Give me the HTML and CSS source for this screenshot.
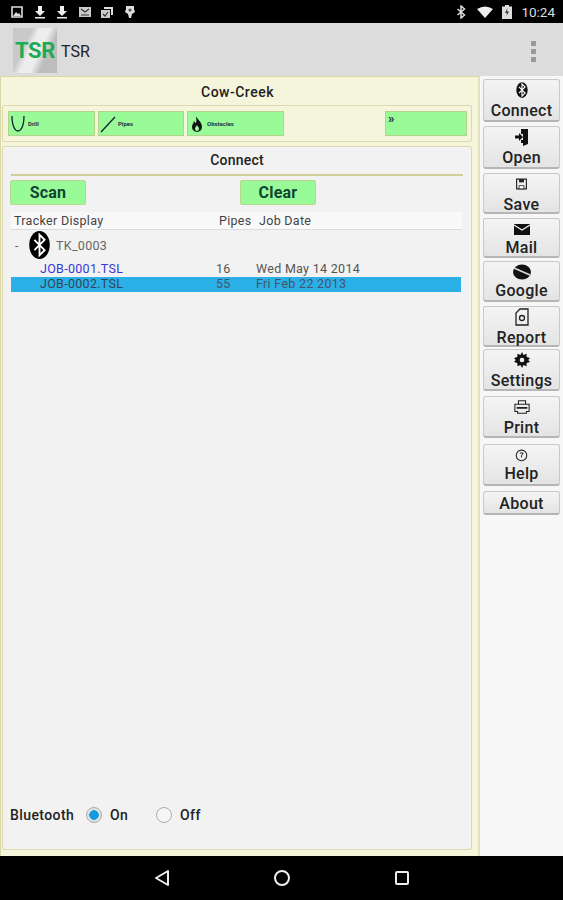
FILE: index.html
```html
<!DOCTYPE html>
<html lang="en">
<head>
<meta charset="utf-8">
<title>TSR</title>
<link rel="stylesheet" href="styles.css">
</head>
<body>
<div class="app">
  <header class="status">
    <div class="status-left">
      <svg class="si" viewBox="0 0 14 14"><path d="M2 2h10v10H2z" fill="none" stroke="#ddd" stroke-width="1.6"/><path d="M3 11l3-4 2 2 1-1 2 3z" fill="#ddd"/></svg>
      <svg class="si" viewBox="0 0 14 14"><path d="M5 1h4v5h3l-5 5-5-5h3zM2 12h10v1.6H2z" fill="#eee"/></svg>
      <svg class="si" viewBox="0 0 14 14"><path d="M5 1h4v5h3l-5 5-5-5h3zM2 12h10v1.6H2z" fill="#eee"/></svg>
      <svg class="si" viewBox="0 0 14 14"><path d="M1 2h12v10H1z" fill="#ccc"/><path d="M3 4l4 3 4-3M3 10h8" fill="none" stroke="#333" stroke-width="1.2"/></svg>
      <svg class="si" viewBox="0 0 14 14"><path d="M1 5h9v8H1z" fill="#ccc"/><path d="M4 4V2h9v8h-2V4z" fill="#ddd"/><path d="M3 9l2 2 3-4" fill="none" stroke="#333" stroke-width="1.2"/></svg>
      <svg class="si" viewBox="0 0 14 14"><path d="M3 1h8v3l1 3-3 2-1 4H6L5 9 2 7l1-3z" fill="#ddd"/><circle cx="7" cy="5" r="1.6" fill="#555"/></svg>
    </div>
    <div class="status-right">
      <svg class="si" viewBox="0 0 14 14"><path d="M3.500 4l7 6-3.500 3V1l3.500 3-7 6" fill="none" stroke="#ddd" stroke-width="1.500"/></svg>
      <svg class="wifi" viewBox="0 0 16 12"><path d="M0 3Q8-2 16 3L8 12z" fill="#eee"/></svg>
      <svg class="batt" viewBox="0 0 10 14"><path d="M3 0h4v1.500h3V14H0V1.500h3z" fill="#ddd"/><path d="M5.500 3L3 8h2l-.5 3L7 6.500H5z" fill="#333"/></svg>
      <span class="clock">10:24</span>
    </div>
  </header>

  <div class="actionbar">
    <div class="logo"><span class="logo-text">TSR</span></div>
    <span class="app-title">TSR</span>
    <div class="overflow"><i></i><i></i><i></i></div>
  </div>

  <main class="content">
    <section class="left">
      <h1 class="project">Cow-Creek</h1>
      <div class="tabs">
        <div class="tab tab-drill">
          <svg class="tab-icon" viewBox="0 0 16 18"><path d="M2 1c0 10 3 15 6 15s6-5 6-15" fill="none" stroke="#123" stroke-width="1.300"/></svg>
          <span>Drill</span>
        </div>
        <div class="tab tab-pipes">
          <svg class="tab-icon" viewBox="0 0 16 18"><path d="M1 17L15 2" fill="none" stroke="#123" stroke-width="1.300"/></svg>
          <span>Pipes</span>
        </div>
        <div class="tab tab-obst">
          <svg class="tab-icon" viewBox="0 0 16 18"><path d="M7 1c1 3 6 6 6 11a5 5 0 0 1-10 0c0-3 2-4 2-6 1 1 1 2 2 2 1-2 0-5 0-7z M8 10c-1 2-2 2-2 4a2 2 0 0 0 4 0c0-2-1-2-2-4z" fill="#111" fill-rule="evenodd"/></svg>
          <span>Obstacles</span>
        </div>
        <div class="tab tab-more">&raquo;</div>
      </div>

      <section class="panel">
        <h2 class="panel-title">Connect</h2>
        <div class="actions">
          <button class="green-btn">Scan</button>
          <button class="green-btn">Clear</button>
        </div>
        <div class="table-head">
          <span class="col-name">Tracker Display</span>
          <span class="col-pipes">Pipes</span>
          <span class="col-date">Job Date</span>
        </div>
        <div class="device">
          <span class="dash">-</span>
          <svg class="bt-badge" viewBox="0 0 22 30"><ellipse cx="11" cy="15" rx="11" ry="15" fill="#000"/><path d="M5.500 9.500l11 11-5.500 5.500V4l5.500 5.500-11 11" fill="none" stroke="#fff" stroke-width="2"/></svg>
          <span class="device-name">TK_0003</span>
        </div>
        <div class="job">
          <span class="job-name">JOB-0001.TSL</span>
          <span class="job-pipes">16</span>
          <span class="job-date">Wed May 14 2014</span>
        </div>
        <div class="job job-selected">
          <span class="job-name">JOB-0002.TSL</span>
          <span class="job-pipes">55</span>
          <span class="job-date">Fri Feb 22 2013</span>
        </div>
        <div class="bt-row">
          <span class="bt-label">Bluetooth</span>
          <span class="radio radio-on"></span>
          <span class="radio-text radio-text-on">On</span>
          <span class="radio"></span>
          <span class="radio-text">Off</span>
        </div>
      </section>
    </section>

    <aside class="side">
      <button class="sbtn h43 gap4">
        <svg class="sicon narrow" viewBox="0 0 16 18"><ellipse cx="8" cy="9" rx="6.500" ry="9" fill="#111"/><path d="M4.500 5.500l7 7L8 16V2l3.500 3.500-7 7" fill="none" stroke="#fff" stroke-width="1.300"/></svg>
        <span>Connect</span>
      </button>
      <button class="sbtn h43 gap4">
        <svg class="sicon" viewBox="0 0 16 18"><path d="M7 1h7v15l-5 2V15H7v-3h2V6H7zM1 7.500h4V5l4 4-4 4v-2.500H1z" fill="#111"/></svg>
        <span>Open</span>
      </button>
      <button class="sbtn h41 gap4">
        <svg class="sicon small" viewBox="0 0 16 18"><path d="M2 3h12v12H2z" fill="none" stroke="#222" stroke-width="1.400"/><path d="M5 3h6v4H5z" fill="#222"/><path d="M5 11h6v4H5z" fill="#fff" stroke="#222"/></svg>
        <span>Save</span>
      </button>
      <button class="sbtn h40 gap3">
        <svg class="sicon tighter" viewBox="0 0 16 14"><path d="M0 2h16v11H0z" fill="#111"/><path d="M0 3l8 5 8-5" fill="none" stroke="#eee" stroke-width="1.300"/></svg>
        <span>Mail</span>
      </button>
      <button class="sbtn h41 gap4">
        <svg class="sicon tighter wide" viewBox="0 0 18 16"><ellipse cx="9" cy="8" rx="9" ry="7.500" fill="#111"/><path d="M1 4l16 7" stroke="#ddd" stroke-width="1.500"/></svg>
        <span>Google</span>
      </button>
      <button class="sbtn h41 gap2">
        <svg class="sicon" viewBox="0 0 14 18"><path d="M5 1h8v16H1V5z" fill="none" stroke="#222" stroke-width="1.300"/><circle cx="7" cy="10" r="2.500" fill="none" stroke="#222" stroke-width="1.300"/></svg>
        <span>Report</span>
      </button>
      <button class="sbtn h42 gap5">
        <svg class="sicon" viewBox="0 0 16 16"><path d="M8 0l1.500 3 3-1.200.2 3.300 3.300 .9-1.800 2 1.800 2-3.300 .9-.2 3.300-3-1.200L8 16l-1.500-3-3 1.200-.2-3.300L0 10l1.800-2L0 6l3.300-.9.2-3.300 3 1.200z" fill="#111"/><circle cx="8" cy="8" r="2.300" fill="#eee"/></svg>
        <span>Settings</span>
      </button>
      <button class="sbtn h42 gap6">
        <svg class="sicon" viewBox="0 0 18 16"><path d="M5 5V1h8v4M1 5h16v8h-3v2H4v-2H1z" fill="none" stroke="#222" stroke-width="1.200"/><path d="M3 9h12" stroke="#222" stroke-width="2"/></svg>
        <span>Print</span>
      </button>
      <button class="sbtn h42 gap5">
        <svg class="sicon tighter small" viewBox="0 0 16 16"><circle cx="8" cy="8.500" r="6.500" fill="none" stroke="#222" stroke-width="1.300"/><path d="M6 5.500h4L8 9v2" fill="none" stroke="#222" stroke-width="1.200"/></svg>
        <span>Help</span>
      </button>
      <button class="sbtn h24"><span>About</span></button>
    </aside>
  </main>

  <nav class="navbar">
    <svg class="nav-icon" viewBox="0 0 18 18"><path d="M15 2v14L3 9z" fill="none" stroke="#eee" stroke-width="2" stroke-linejoin="round"/></svg>
    <svg class="nav-icon" viewBox="0 0 18 18"><circle cx="9" cy="9" r="7" fill="none" stroke="#eee" stroke-width="2"/></svg>
    <svg class="nav-icon" viewBox="0 0 18 18"><rect x="3" y="3" width="12" height="12" rx="1" fill="none" stroke="#eee" stroke-width="2"/></svg>
  </nav>
</div>
</body>
</html>
```

FILE: styles.css
```css
* { box-sizing: border-box; }
html, body { margin: 0; padding: 0; }
body { width: 563px; height: 900px; overflow: hidden; font-family: Roboto, "Liberation Sans", sans-serif; color: #111; }
.app { display: flex; flex-direction: column; height: 900px; }

/* status bar */
.status { height: 23px; background: #000; display: flex; justify-content: space-between; align-items: center; padding: 0 8px 0 10px; }
.status-left { display: flex; gap: 8.500px; }
.status-right { display: flex; align-items: center; gap: 7px; }
.si { width: 14px; height: 14px; display: block; }
.wifi { width: 16px; height: 12px; margin-left: 2px; display: block; }
.batt { width: 10px; height: 14px; margin-left: 2px; display: block; }
.clock { color: #ddd; font-size: 13.500px; margin-left: 2px; }

/* action bar */
.actionbar { height: 53px; background: #dcdcdc; display: flex; align-items: center; padding-left: 13px; position: relative; }
.logo { width: 44px; height: 45px; margin-top: 2px; background: linear-gradient(115deg, #c9c9c9 0 30%, #ededed 42% 58%, #bdbdbd 72%); display: flex; align-items: center; justify-content: center; }
.logo-text { color: #1dab55; font-size: 22px; font-weight: 700; letter-spacing: -.3px; }
.app-title { font-size: 16px; color: #222; margin: 3px 0 0 4px; letter-spacing: .1px; }
.overflow { position: absolute; right: 27px; top: 18px; display: flex; flex-direction: column; gap: 3px; }
.overflow i { width: 5px; height: 5px; background: #999; display: block; }

/* main */
.content { height: 780px; display: flex; }
.left { width: 480px; background: #f5f5dc; border: 1px solid #d9d6a8; border-bottom: 0; border-right: 2px solid #e3e1bd; padding: 0 5px 6px 1px; display: flex; flex-direction: column; }
.project { margin: 0; height: 28px; padding-top: 7px; text-align: center; font-size: 14px; line-height: 17px; font-weight: 500; color: #222; letter-spacing: .5px; }
.tabs { height: 37px; margin-right: 1px; border: 1px solid #dcd9ae; border-radius: 2px; display: flex; align-items: center; padding: 0 5px; gap: 3px; }
.tab { flex: none; height: 25px; background: #98fb98; border: 1px solid #b5d28b; display: flex; align-items: center; font-size: 6px; font-weight: 700; color: #234; gap: 2px; padding-left: 1px; }
.tab-drill { width: 87px; }
.tab-pipes { width: 86px; }
.tab-obst { width: 97px; }
.tab-more { width: 82px; margin-left: 98px; align-items: flex-start; font-size: 13px; line-height: 13px; padding-left: 2px; }
.tab-icon { width: 16px; height: 18px; display: block; }

.panel { margin-top: 4px; margin-right: 1px; flex: 1; background: #f2f2f2; border: 1px solid #dcd9ae; border-radius: 2px; padding: 0 7px 0 7px; display: flex; flex-direction: column; }
.panel-title { margin: 0 1px; height: 29px; border-bottom: 2px solid #cfcf9d; text-align: center; font-size: 14px; line-height: 27px; font-weight: 500; color: #222; letter-spacing: .2px; }
.actions { display: flex; gap: 154px; margin-top: 4px; }
.green-btn { width: 76px; height: 25px; padding: 0; background: #98fb98; border: 1px solid #b9d58f; border-radius: 2px; font: 700 16px Roboto, "Liberation Sans", sans-serif; color: #143; letter-spacing: .2px; }
.table-head { margin: 7px 2px 0 1px; height: 18px; background: linear-gradient(#f8f8f8, #fafafa); border-bottom: 1px solid #dcdcdc; display: flex; align-items: center; font-size: 12.500px; color: #444; letter-spacing: .3px; position: relative; }
.col-name { margin-left: 3px; width: 205px; }
.col-pipes { width: 40px; }
.device { height: 32px; margin-left: 5px; padding-bottom: 2px; display: flex; align-items: center; font-size: 12.500px; color: #666; }
.dash { width: 13px; }
.bt-badge { width: 21px; height: 28px; display: block; margin-left: 1px; }
.device-name { margin-left: 6px; letter-spacing: .3px; }
.job { margin-left: 1px; margin-right: 3px; height: 15px; padding-bottom: 2px; display: flex; align-items: center; font-size: 12.500px; color: #555; letter-spacing: .3px; }
.job-name { margin-left: 29px; width: 176px; color: #3838d8; }
.job-pipes { width: 40px; }
.job-selected { background: #2ab0e6; color: #456; }
.job-selected .job-name { color: #345; }
.bt-row { margin-top: auto; margin-bottom: 26px; display: flex; align-items: center; font-size: 14px; font-weight: 500; color: #222; letter-spacing: .4px; }
.bt-label { width: 76px; flex: none; }
.radio { width: 16px; height: 16px; border-radius: 50%; border: 1px solid #aaa; background: #f6f6f6; }
.radio-on { background: radial-gradient(circle, #0f9bdc 0 4.500px, #e2e2e2 5px); }
.radio-text { margin-left: 8px; }
.radio-text-on { width: 46px; }

/* sidebar */
.side { width: 83px; background: #f7f7f7; padding: 3px 3px 0 3px; display: flex; flex-direction: column; align-items: stretch; }
.sbtn { padding: 1px 0 0; background: linear-gradient(#f4f4f4, #e4e4e4); border: 1px solid #c9c9c9; border-bottom: 2px solid #b5b5b5; border-radius: 3px; display: flex; flex-direction: column; align-items: center; justify-content: flex-start; font: 500 16px/18px Roboto, "Liberation Sans", sans-serif; color: #222; letter-spacing: .3px; flex: none; }
.sicon { width: 16px; height: 18px; display: block; margin-bottom: 3px; flex: none; }
.sicon.small { width: 13px; }
.sicon.narrow { width: 14px; }
.sicon.wide { width: 18px; }
.sicon.tight { margin-bottom: 2px; }
.sicon.tighter { margin-bottom: 1px; }
.h43 { height: 43px; }
.h42 { height: 42px; }
.h41 { height: 41px; }
.h40 { height: 40px; }
.h24 { height: 24px; justify-content: center; padding: 2px 0 0; }
.gap2 { margin-bottom: 2px; }
.gap3 { margin-bottom: 3px; }
.gap4 { margin-bottom: 4px; }
.gap5 { margin-bottom: 5px; }
.gap6 { margin-bottom: 6px; }

/* nav */
.navbar { height: 44px; background: #000; display: flex; justify-content: flex-start; align-items: center; padding-left: 153px; gap: 102px; }
.nav-icon { width: 18px; height: 18px; display: block; }
```
